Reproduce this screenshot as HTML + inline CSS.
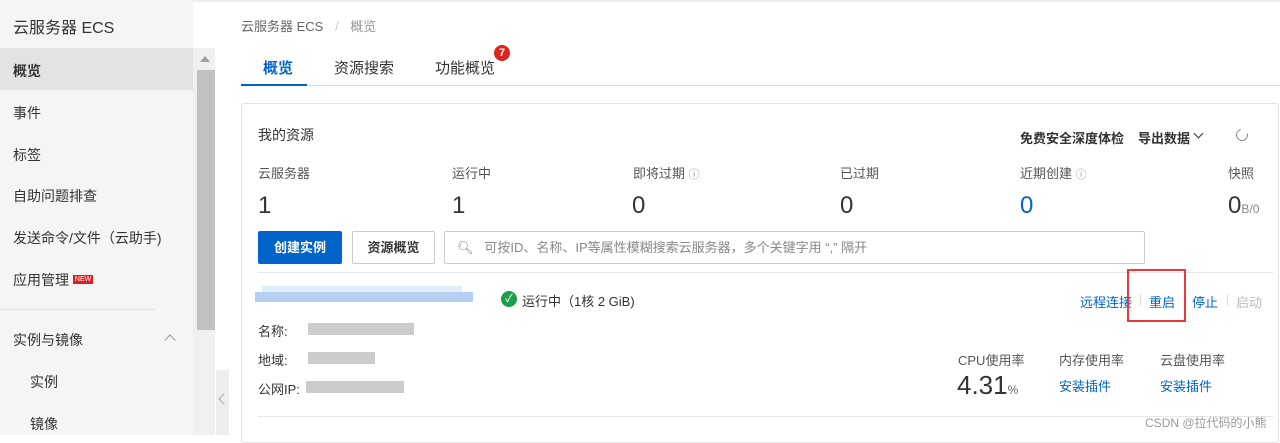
<!DOCTYPE html>
<html><head><meta charset="utf-8"><style>
*{margin:0;padding:0;box-sizing:border-box}
body{width:1280px;height:435px;overflow:hidden;background:#fff;font-family:"Liberation Sans","Noto Sans CJK SC",sans-serif;color:#333;position:relative}
.a{position:absolute;white-space:nowrap}
.side{left:0;top:0;width:193px;height:435px;background:#f5f5f5}
.si{left:13px;font-size:14px;color:#333}
.blue{color:#0064c8}
.g{color:#555}
.blur{position:absolute;background:#ccc;height:12px}
.num{font-size:24px;color:#333}
.sep{position:absolute;top:294px;width:1px;height:12px;background:#ddd}
</style></head><body>
<div class="a" style="left:0;top:0;width:1280px;height:3px;background:linear-gradient(#e8e8e8,#fff)"></div>
<div class="a side"></div>
<div class="a" style="left:0;top:48px;width:193px;height:42px;background:#e3e3e3"></div>
<div class="a si" style="top:14px;font-size:16px">云服务器 ECS</div>
<div class="a si" style="top:61px;font-weight:bold">概览</div>
<div class="a si" style="top:103px">事件</div>
<div class="a si" style="top:145px">标签</div>
<div class="a si" style="top:186px">自助问题排查</div>
<div class="a si" style="top:228px">发送命令/文件（云助手)</div>
<div class="a si" style="top:270px">应用管理 <span style="background:#e02020;color:#fff;font-size:7px;padding:1px 2px;vertical-align:4px">NEW</span></div>
<div class="a" style="left:0;top:309px;width:155px;height:1px;background:#e3e3e3"></div>
<div class="a si" style="top:330px">实例与镜像</div>
<div class="a" style="left:166px;top:336px;width:8px;height:8px;border-left:1.5px solid #999;border-top:1.5px solid #999;transform:rotate(45deg)"></div>
<div class="a si" style="top:372px;left:30px">实例</div>
<div class="a si" style="top:414px;left:30px">镜像</div>
<div class="a" style="left:193px;top:48px;width:22px;height:387px;background:#f0f0f0"></div>
<div class="a" style="left:197px;top:70px;width:18px;height:260px;background:#c1c1c1"></div>
<div class="a" style="left:200px;top:56px;border:5px solid transparent;border-bottom:6px solid #a0a0a0;border-top:0"></div>
<div class="a" style="left:216px;top:370px;width:13px;height:65px;background:#eee"></div>
<div class="a" style="left:220px;top:395px;width:8px;height:8px;border-left:1px solid #aaa;border-bottom:1px solid #aaa;transform:rotate(45deg)"></div>
<div class="a" style="left:241px;top:16px;font-size:13px;color:#666">云服务器 ECS <span style="color:#ccc;margin:0 8px">/</span> <span style="color:#999">概览</span></div>
<div class="a" style="left:241px;top:85px;width:1039px;height:1px;background:#ddd"></div>
<div class="a" style="left:241px;top:84px;width:66px;height:2px;background:#0064c8"></div>
<div class="a" style="left:263px;top:57px;font-size:15px;font-weight:bold;color:#0064c8">概览</div>
<div class="a" style="left:334px;top:57px;font-size:15px">资源搜索</div>
<div class="a" style="left:435px;top:57px;font-size:15px">功能概览</div>
<div class="a" style="left:494px;top:45px;width:16px;height:16px;border-radius:50%;background:#d9251d;color:#fff;font-size:11px;font-weight:bold;text-align:center;line-height:16px">7</div>
<div class="a" style="left:241px;top:103px;width:1038px;height:340px;border:1px solid #e3e3e3;border-radius:3px"></div>
<div class="a" style="left:258px;top:125px;font-size:14px">我的资源</div>
<div class="a" style="left:1020px;top:128px;font-size:13px;font-weight:bold">免费安全深度体检</div>
<div class="a" style="left:1138px;top:128px;font-size:13px;font-weight:bold">导出数据</div>
<div class="a" style="left:1195px;top:130px;width:7px;height:7px;border-right:1.5px solid #333;border-bottom:1.5px solid #333;transform:rotate(45deg)"></div>
<div class="a" style="left:1236px;top:129px;width:12px;height:12px;border:1.3px solid #888;border-radius:50%;border-top-color:transparent;transform:rotate(30deg)"></div>
<div class="a g" style="left:258px;top:163px;font-size:13px">云服务器</div>
<div class="a g" style="left:452px;top:163px;font-size:13px">运行中</div>
<div class="a g" style="left:633px;top:163px;font-size:13px">即将过期 <span style="font-size:11px;color:#999">ⓘ</span></div>
<div class="a g" style="left:840px;top:163px;font-size:13px">已过期</div>
<div class="a g" style="left:1020px;top:163px;font-size:13px">近期创建 <span style="font-size:11px;color:#999">ⓘ</span></div>
<div class="a g" style="left:1228px;top:163px;font-size:13px">快照</div>
<div class="a num" style="left:258px;top:192px">1</div>
<div class="a num" style="left:452px;top:192px">1</div>
<div class="a num" style="left:632px;top:192px">0</div>
<div class="a num" style="left:840px;top:192px">0</div>
<div class="a num blue" style="left:1020px;top:192px;color:#0064c8">0</div>
<div class="a num" style="left:1228px;top:192px">0<span style="font-size:12px;color:#888">B/0</span></div>
<div class="a" style="left:258px;top:231px;width:84px;height:33px;background:#0064c8;border-radius:2px;color:#fff;font-size:13px;font-weight:bold;text-align:center;line-height:33px">创建实例</div>
<div class="a" style="left:352px;top:231px;width:83px;height:33px;border:1px solid #ccc;border-radius:2px;font-size:13px;font-weight:bold;text-align:center;line-height:31px">资源概览</div>
<div class="a" style="left:444px;top:231px;width:701px;height:33px;border:1px solid #ccc;border-radius:2px;font-size:13px;color:#888;line-height:31px;padding-left:12px">🔍︎&nbsp;&nbsp; 可按ID、名称、IP等属性模糊搜索云服务器，多个关键字用 “,” 隔开</div>
<div class="a" style="left:258px;top:272px;width:1015px;height:1px;background:#e6e6e6"></div>
<div class="a" style="left:255px;top:292px;width:218px;height:10px;background:#a8c8ee;opacity:.85"></div>
<div class="a" style="left:262px;top:286px;width:200px;height:6px;background:#e1ecf9"></div>
<div class="a" style="left:501px;top:291px;width:16px;height:16px;border-radius:50%;background:#1e9e4a;color:#fff;font-size:11px;text-align:center;line-height:16px">✓</div>
<div class="a" style="left:522px;top:291px;font-size:13px">运行中（1核 2 GiB)</div>
<div class="a blue" style="left:1080px;top:292px;font-size:13px">远程连接</div>
<div class="sep" style="left:1140px"></div>
<div class="a blue" style="left:1149px;top:292px;font-size:13px">重启</div>
<div class="sep" style="left:1184px"></div>
<div class="a blue" style="left:1192px;top:292px;font-size:13px">停止</div>
<div class="sep" style="left:1227px"></div>
<div class="a" style="left:1236px;top:292px;font-size:13px;color:#bbb">启动</div>
<div class="a" style="left:1127px;top:269px;width:59px;height:53px;border:2px solid #e83a3a"></div>
<div class="a" style="left:258px;top:321px;font-size:13px">名称:</div>
<div class="blur" style="left:308px;top:323px;width:106px"></div>
<div class="a" style="left:258px;top:350px;font-size:13px">地域:</div>
<div class="blur" style="left:308px;top:352px;width:67px"></div>
<div class="a" style="left:258px;top:379px;font-size:13px">公网IP:</div>
<div class="blur" style="left:306px;top:381px;width:98px"></div>
<div class="a g" style="left:958px;top:350px;font-size:13px">CPU使用率</div>
<div class="a g" style="left:1059px;top:350px;font-size:13px">内存使用率</div>
<div class="a g" style="left:1160px;top:350px;font-size:13px">云盘使用率</div>
<div class="a" style="left:957px;top:370px;font-size:26px">4.31<span style="font-size:12px;color:#666">%</span></div>
<div class="a blue" style="left:1059px;top:376px;font-size:13px">安装插件</div>
<div class="a blue" style="left:1160px;top:376px;font-size:13px">安装插件</div>
<div class="a" style="left:258px;top:416px;width:1015px;height:1px;background:#e6e6e6"></div>
<div class="a" style="left:1145px;top:414px;font-size:12px;color:#999">CSDN @拉代码的小熊</div>
</body></html>
